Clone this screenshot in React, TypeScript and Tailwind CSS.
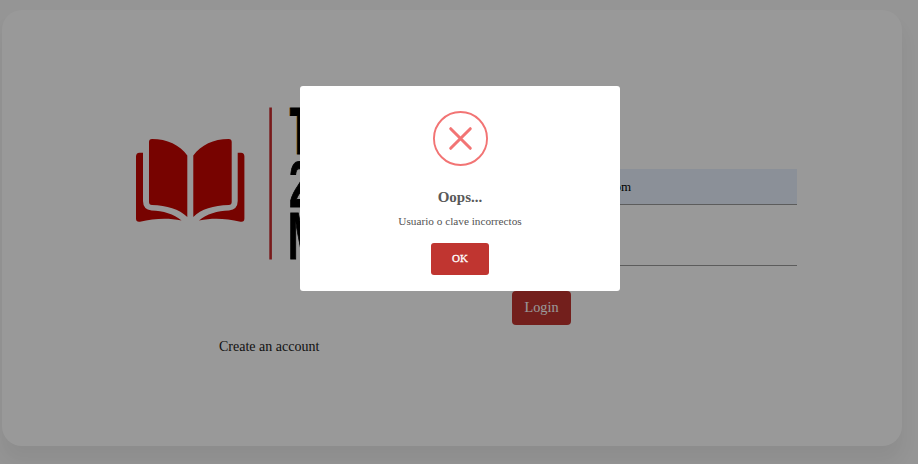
function Logo() {
  return (
    <svg className="block h-[170px] w-[230px]" viewBox="130 98 230 170">
      <g fill="#c70500">
        <path d="M149 142 Q149 139 152 139 C167 139 180 145 187.3 155.5 V217 C179 209 167 205.500 152 205 Q149 205 149 202 Z" />
        <path d="M231.700 142 Q231.700 139 228.700 139 C213.500 139 201 145 193.300 155.500 V217 C201 209 213.500 205.500 228.700 205 Q231.700 205 231.700 202 Z" />
        <path d="M143 152.700 H139.500 Q136 152.700 136 156.500 V218.500 Q136 222.300 140 221.700 C154 218.500 168 217.800 181.500 220.500 C174 214 163 210.800 151.500 210.500 Q143 209.500 143 201 Z" />
        <path d="M237.700 152.700 H241 Q244.400 152.700 244.400 156.500 V218.500 Q244.400 222.300 240.500 221.700 C226 218.500 213 217.800 199 220.500 C206.500 214 217.500 210.800 229 210.500 Q237.700 209.500 237.700 201 Z" />
        <rect x="269.300" y="107.500" width="2.600" height="152" fill="#c92c2e" />
      </g>
      <g
        className="font-['Liberation_Sans',Arial,sans-serif] font-bold"
        fontSize="66.500"
        fill="#000"
        stroke="#000"
        strokeWidth="1.200"
      >
        <text transform="translate(289.800 154.300) scale(.48 1)">T</text>
        <text transform="translate(289.200 206.700) scale(.55 .98)">2</text>
        <text transform="translate(287.900 258.500) scale(.6 1)">M</text>
      </g>
    </svg>
  );
}

function ErrorDialog() {
  return (
    <div className="fixed inset-0 bg-black/40">
      <div
        role="alertdialog"
        className="mx-auto mt-[86px] flex h-[205px] w-80 translate-x-px flex-col items-center rounded-[3px] bg-white pt-[25px] text-[#545454]"
      >
        <svg className="size-[55px] shrink-0" viewBox="0 0 55 55" fill="none" stroke="#f27474">
          <circle cx="27.500" cy="27.500" r="26.550" strokeWidth="1.900" />
          <path d="M17.700 17.700 37.300 37.300M37.300 17.700 17.700 37.300" strokeWidth="3" strokeLinecap="round" />
        </svg>
        <h2 className="mt-[21px] text-[15px] leading-5 font-bold text-[#595959]">Oops...</h2>
        <p className="mt-[7px] text-[11.250px] leading-[14px]">Usuario o clave incorrectos</p>
        <button className="mt-[15px] h-8 w-[58px] shrink-0 rounded-[3px] bg-[#c03530] pb-0.5 text-[11px] text-white [-webkit-text-stroke:0.3px_white]">
          OK
        </button>
      </div>
    </div>
  );
}

export default function App() {
  return (
    <div className="h-[464px] overflow-hidden bg-[#f8f8f8] pt-2.5 pl-0.5 font-['Liberation_Serif','Times_New_Roman',serif]">
      <main className="flex h-[436px] w-[900px] rounded-[20px] bg-white shadow-[0_15px_16.83px_0.17px_rgba(0,0,0,0.05)]">
        <section className="w-[510px] pt-[88px] pl-32">
          <Logo />
          <a href="#" className="mt-[70px] ml-[89px] block w-fit text-sm leading-[18px] text-[#222]">
            Create an account
          </a>
        </section>
        <form className="w-[285px] pt-[159px]">
          <div className="flex h-9 items-center border-b border-[#999] bg-[#e8f0fe] text-[13px] text-black">
            <span className="w-[119px] text-right">admin@gmail.com</span>
          </div>
          <div className="mt-[25px] h-9 border-b border-[#999]" />
          <button type="button" className="mt-[25px] h-[34px] w-[59px] rounded bg-[#c03530] text-[14.250px] text-white">
            Login
          </button>
        </form>
      </main>
      <ErrorDialog />
    </div>
  );
}
